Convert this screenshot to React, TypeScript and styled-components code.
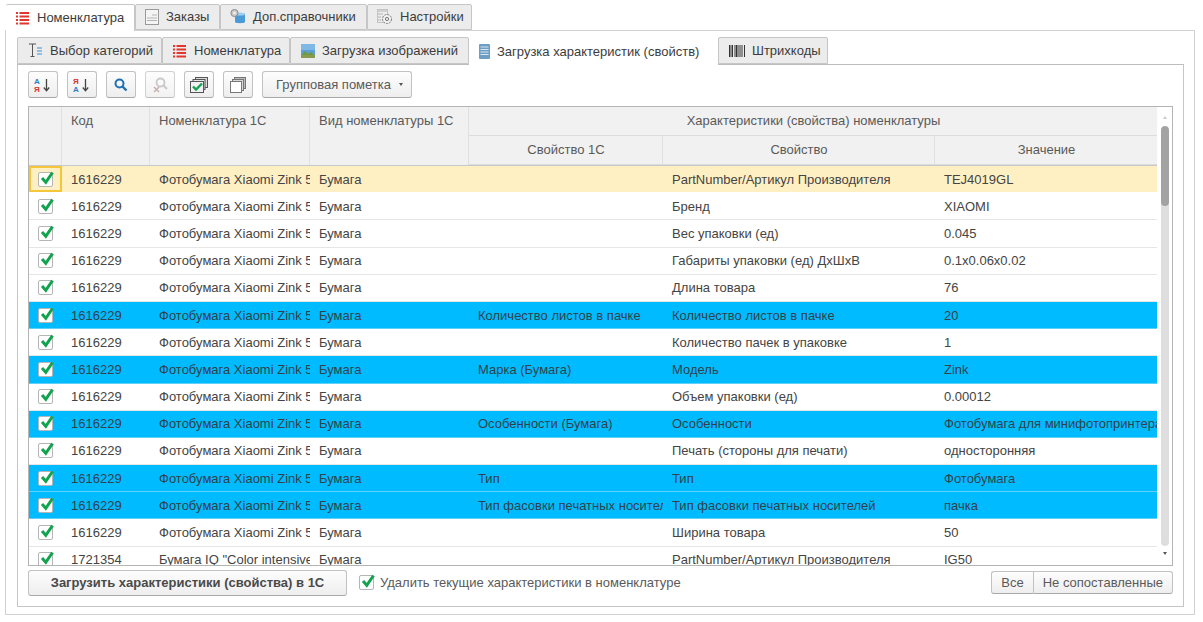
import { FC, ReactNode } from 'react';
import styled, { createGlobalStyle } from 'styled-components';

const GREEN = '#12a34f';

const GlobalStyle = createGlobalStyle`
  html, body {
    margin: 0;
    padding: 0;
    background: #fff;
  }
  body {
    font-family: "Liberation Sans", Arial, sans-serif;
    font-size: 13px;
    color: #4a4a4a;
  }
  * {
    box-sizing: border-box;
  }
`;

interface IRow {
  code: string;
  name: string;
  prop1c?: string;
  prop: string;
  value: string;
  blue?: boolean;
  current?: boolean;
}

const XIAOMI = 'Фотобумага Xiaomi Zink 50 листов';

const rows: IRow[] = [
  { code: '1616229', name: XIAOMI, prop: 'PartNumber/Артикул Производителя', value: 'TEJ4019GL', current: true },
  { code: '1616229', name: XIAOMI, prop: 'Бренд', value: 'XIAOMI' },
  { code: '1616229', name: XIAOMI, prop: 'Вес упаковки (ед)', value: '0.045' },
  { code: '1616229', name: XIAOMI, prop: 'Габариты упаковки (ед) ДхШхВ', value: '0.1x0.06x0.02' },
  { code: '1616229', name: XIAOMI, prop: 'Длина товара', value: '76' },
  { code: '1616229', name: XIAOMI, prop1c: 'Количество листов в пачке', prop: 'Количество листов в пачке', value: '20', blue: true },
  { code: '1616229', name: XIAOMI, prop: 'Количество пачек в упаковке', value: '1' },
  { code: '1616229', name: XIAOMI, prop1c: 'Марка (Бумага)', prop: 'Модель', value: 'Zink', blue: true },
  { code: '1616229', name: XIAOMI, prop: 'Объем упаковки (ед)', value: '0.00012' },
  { code: '1616229', name: XIAOMI, prop1c: 'Особенности (Бумага)', prop: 'Особенности', value: 'Фотобумага для минифотопринтера', blue: true },
  { code: '1616229', name: XIAOMI, prop: 'Печать (стороны для печати)', value: 'односторонняя' },
  { code: '1616229', name: XIAOMI, prop1c: 'Тип', prop: 'Тип', value: 'Фотобумага', blue: true },
  { code: '1616229', name: XIAOMI, prop1c: 'Тип фасовки печатных носителей', prop: 'Тип фасовки печатных носителей', value: 'пачка', blue: true },
  { code: '1616229', name: XIAOMI, prop: 'Ширина товара', value: '50' },
  { code: '1721354', name: 'Бумага IQ "Color intensive" A4', prop: 'PartNumber/Артикул Производителя', value: 'IG50' },
];

const ListIcon: FC = () => (
  <svg width="14" height="14" viewBox="0 0 14 14">
    <g fill="#e2372c">
      <rect x="0" y="1" width="2" height="2" />
      <rect x="0" y="4.5" width="2" height="2" />
      <rect x="0" y="8" width="2" height="2" />
      <rect x="0" y="11.5" width="2" height="2" />
      <rect x="3.5" y="1" width="9.5" height="2" />
      <rect x="3.5" y="4.5" width="9.5" height="2" />
      <rect x="3.5" y="8" width="9.5" height="2" />
      <rect x="3.5" y="11.5" width="9.5" height="2" />
    </g>
  </svg>
);

const OrdersIcon: FC = () => (
  <svg width="14" height="16" viewBox="0 0 14 16">
    <rect x="0.5" y="0.5" width="13" height="15" fill="#f4f4f4" stroke="#9a9a9a" />
    <path d="M7 6h5M2 9h10M2 11.5h10" stroke="#b5b5b5" />
  </svg>
);

const DirectoryIcon: FC = () => (
  <svg width="16" height="15" viewBox="0 0 16 15">
    <path d="M5 5c0-1.5 10-1.5 10 0v8c0 1.6-10 1.6-10 0z" fill="#4a9bd6" />
    <ellipse cx="10" cy="5" rx="5" ry="1.6" fill="#9cd0f0" />
    <circle cx="4.5" cy="4" r="3.6" fill="#c9c9c9" stroke="#8d8d8d" />
    <circle cx="4.5" cy="4" r="1.3" fill="#f2f2f2" />
  </svg>
);

const SettingsIcon: FC = () => (
  <svg width="16" height="16" viewBox="0 0 16 16" fill="none">
    <path d="M1 2h9M1 5h5M1 8h3M1 11h3" stroke="#b5b5b5" />
    <rect x="0.5" y="0.5" width="10" height="13" stroke="#c4c4c4" />
    <circle cx="10" cy="10" r="4.5" fill="#f0f0f0" stroke="#777" strokeDasharray="2 1" />
    <circle cx="10" cy="10" r="1.6" stroke="#777" />
  </svg>
);

const CategoryIcon: FC = () => (
  <svg width="15" height="15" viewBox="0 0 15 15" fill="none">
    <path d="M1 1h7M4.500 1v12M2.500 13.500h4" stroke="#555" />
    <path d="M9 5h5M9 8h5M9 11h5" stroke="#3a8fd0" />
  </svg>
);

const PictureIcon: FC = () => (
  <svg width="14" height="14" viewBox="0 0 14 14">
    <rect width="14" height="14" fill="#5d9fd4" />
    <rect y="0" width="14" height="6" fill="#7fb8e4" />
    <path d="M0 12l4-5 3 3 3-2 4 4v2H0z" fill="#6d9b3d" />
    <rect x="0" y="11" width="14" height="3" fill="#8a9a50" />
  </svg>
);

const PropertiesIcon: FC = () => (
  <svg width="11" height="15" viewBox="0 0 11 15">
    <rect width="11" height="15" rx="1" fill="#6f9ec4" />
    <path d="M1.500 3h8M1.500 5.500h8M1.500 8h8M1.500 10.500h8" stroke="#d6e6f2" />
  </svg>
);

const BarcodeIcon: FC = () => (
  <svg width="16" height="12" viewBox="0 0 16 12">
    <path d="M0.500 0v12M2 0v12M3.500 0v12M6 0v12M7.500 0v12M9 0v12M11 0v12M13 0v12M15.500 0v12" stroke="#333" />
  </svg>
);

const SortIcon: FC<{ reversed?: boolean }> = ({ reversed }) => (
  <svg width="18" height="17" viewBox="0 0 18 17">
    <text x="0" y="7.500" fontFamily="Liberation Sans" fontSize="8" fontWeight="700" fill={reversed ? '#d9362b' : '#2f7fc4'}>
      {reversed ? 'Я' : 'А'}
    </text>
    <text x="0" y="16" fontFamily="Liberation Sans" fontSize="8" fontWeight="700" fill={reversed ? '#2f7fc4' : '#d9362b'}>
      {reversed ? 'А' : 'Я'}
    </text>
    <path d="M12.500 3v11M9.800 11.500l2.700 3.300 2.700-3.300" stroke="#444" strokeWidth="1.300" fill="none" />
  </svg>
);

const SearchIcon: FC = () => (
  <svg width="14" height="14" viewBox="0 0 14 14" fill="none">
    <circle cx="5.500" cy="5.500" r="4" stroke="#1f6fb5" strokeWidth="2" />
    <path d="M8.500 8.500l4 4" stroke="#1f6fb5" strokeWidth="2.400" />
  </svg>
);

const SearchCancelIcon: FC = () => (
  <svg width="18" height="18" viewBox="0 0 18 18" fill="none">
    <circle cx="9.500" cy="6.500" r="4" stroke="#b8b8b8" strokeWidth="1.800" />
    <path d="M12.500 9.500l3.500 3.500" stroke="#b8b8b8" strokeWidth="2" />
    <path d="M3 11l5 5M8 11l-5 5" stroke="#b39a9a" strokeWidth="1.600" />
  </svg>
);

const CheckedCopiesIcon: FC = () => (
  <svg width="18" height="16" viewBox="0 0 18 16">
    <rect x="5.500" y="0.500" width="12" height="10" fill="#d9d9d9" stroke="#555" />
    <rect x="3" y="2.500" width="12" height="10" fill="#e6e6e6" stroke="#555" />
    <rect x="0.500" y="4.500" width="13" height="11" fill="#f2f2f2" stroke="#555" />
    <path d="M3 9.500l3 3 6-6" stroke={GREEN} strokeWidth="2.400" fill="none" />
  </svg>
);

const CopiesIcon: FC = () => (
  <svg width="16" height="16" viewBox="0 0 16 16" fill="#fff">
    <rect x="4.500" y="0.500" width="11" height="11" fill="#bcbcbc" stroke="#777" />
    <rect x="2.500" y="2.500" width="11" height="11" fill="#d8d8d8" stroke="#777" />
    <rect x="0.500" y="4.500" width="11" height="11" stroke="#777" />
  </svg>
);

const Check: FC<{ size?: number }> = ({ size = 15 }) => (
  <CheckBox $size={size}>
    <svg width={size + 1} height={size} viewBox="0 0 16 15" fill="none">
      <path d="M3 7l3.800 4.300L13.500 1.500" stroke={GREEN} strokeWidth="3" />
    </svg>
  </CheckBox>
);

const tabs: { label: string; icon: ReactNode; active?: boolean; width: number }[] = [
  { label: 'Номенклатура', icon: <ListIcon />, active: true, width: 129 },
  { label: 'Заказы', icon: <OrdersIcon />, width: 85 },
  { label: 'Доп.справочники', icon: <DirectoryIcon />, width: 147 },
  { label: 'Настройки', icon: <SettingsIcon />, width: 105 },
];

const subTabs: { label: string; icon: ReactNode; active?: boolean; width: number }[] = [
  { label: 'Выбор категорий', icon: <CategoryIcon />, width: 145 },
  { label: 'Номенклатура', icon: <ListIcon />, width: 128 },
  { label: 'Загрузка изображений', icon: <PictureIcon />, width: 179 },
  { label: 'Загрузка характеристик (свойств)', icon: <PropertiesIcon />, active: true, width: 249 },
  { label: 'Штрихкоды', icon: <BarcodeIcon />, width: 110 },
];

const App: FC = () => {
  return (
    <Root>
      <GlobalStyle />
      <TabStrip>
        {tabs.map((tab) => (
          <Tab key={tab.label} $active={tab.active} $width={tab.width}>
            {tab.icon}
            {tab.label}
          </Tab>
        ))}
      </TabStrip>
      <Panel>
        <SubTabStrip>
          {subTabs.map((tab) => (
            <SubTab key={tab.label} $active={tab.active} $width={tab.width}>
              {tab.icon}
              {tab.label}
            </SubTab>
          ))}
        </SubTabStrip>
        <SubPanel>
          <Toolbar>
            <ToolButton><SortIcon /></ToolButton>
            <ToolButton><SortIcon reversed /></ToolButton>
            <ToolButton><SearchIcon /></ToolButton>
            <ToolButton $disabled><SearchCancelIcon /></ToolButton>
            <ToolButton><CheckedCopiesIcon /></ToolButton>
            <ToolButton><CopiesIcon /></ToolButton>
            <MenuButton>
              Групповая пометка
              <Caret />
            </MenuButton>
          </Toolbar>
          <Grid>
            <GridBody>
              <HeaderRow>
                <HeaderCell $area="1 / 1 / 3 / 2" />
                <HeaderCell $area="1 / 2 / 3 / 3">Код</HeaderCell>
                <HeaderCell $area="1 / 3 / 3 / 4">Номенклатура 1С</HeaderCell>
                <HeaderCell $area="1 / 4 / 3 / 5">Вид номенклатуры 1С</HeaderCell>
                <HeaderCell $area="1 / 5 / 2 / 8" $center>Характеристики (свойства) номенклатуры</HeaderCell>
                <HeaderCell $area="2 / 5 / 3 / 6" $center>Свойство 1С</HeaderCell>
                <HeaderCell $area="2 / 6 / 3 / 7" $center>Свойство</HeaderCell>
                <HeaderCell $area="2 / 7 / 3 / 8" $center>Значение</HeaderCell>
              </HeaderRow>
              <RowList>
                {rows.map((row, index) => (
                  <Row key={index} $blue={row.blue} $current={row.current}>
                    <CheckCell $current={row.current}>
                      <Check />
                    </CheckCell>
                    <Cell>{row.code}</Cell>
                    <Cell>{row.name}</Cell>
                    <Cell>Бумага</Cell>
                    <Cell>{row.prop1c}</Cell>
                    <Cell>{row.prop}</Cell>
                    <Cell>{row.value}</Cell>
                  </Row>
                ))}
              </RowList>
            </GridBody>
            <ScrollBar>
              <ScrollArrow />
              <ScrollTrack>
                <ScrollThumb />
              </ScrollTrack>
              <ScrollArrow $down />
            </ScrollBar>
          </Grid>
          <Footer>
            <LoadButton>Загрузить характеристики (свойства) в 1С</LoadButton>
            <FooterCheck>
              <Check />
              Удалить текущие характеристики в номенклатуре
            </FooterCheck>
            <ButtonGroup>
              <GroupButton>Все</GroupButton>
              <GroupButton>Не сопоставленные</GroupButton>
            </ButtonGroup>
          </Footer>
        </SubPanel>
      </Panel>
    </Root>
  );
};

const Root = styled.div`
  width: 1203px;
  height: 622px;
  padding: 4px 8px 7px 5px;
  display: flex;
  flex-direction: column;
  overflow: hidden;
`;

const TabStrip = styled.div`
  display: flex;
  padding-left: 1px;
  height: 26px;
  position: relative;
  z-index: 1;
`;

const Tab = styled.div<{ $active?: boolean; $width: number }>`
  width: ${(p) => p.$width}px;
  height: ${(p) => (p.$active ? 27 : 26)}px;
  display: flex;
  align-items: center;
  gap: 7px;
  padding-left: ${(p) => (p.$active ? 10 : 9)}px;
  padding-bottom: 1px;
  background: ${(p) => (p.$active ? '#fff' : '#ececec')};
  border: 1px solid #c6c6c6;
  border-bottom: ${(p) => (p.$active ? 'none' : '1px solid #c6c6c6')};
  border-left: ${(p) => (p.$active ? 'none' : '1px solid #c6c6c6')};
  border-radius: 2px 2px 0 0;
  color: #3c3c3c;
  white-space: nowrap;
`;

const Panel = styled.div`
  flex: 1;
  border: 1px solid #d2d2d2;
  padding: 6px 10px 7px 11px;
  display: flex;
  flex-direction: column;
`;

const SubTabStrip = styled.div`
  display: flex;
  height: 27px;
  position: relative;
  z-index: 1;
`;

const SubTab = styled.div<{ $active?: boolean; $width: number }>`
  width: ${(p) => p.$width}px;
  height: ${(p) => (p.$active ? 28 : 27)}px;
  display: flex;
  align-items: center;
  gap: 7px;
  padding-left: 10px;
  background: ${(p) => (p.$active ? '#fff' : '#ececec')};
  border: 1px solid #c6c6c6;
  border-left-width: ${(p) => (p.$active ? 0 : 1)}px;
  border-right-width: ${(p) => (p.$active ? 0 : 1)}px;
  border-bottom-width: ${(p) => (p.$active ? 0 : 1)}px;
  border-top-color: ${(p) => (p.$active ? '#fff' : '#c6c6c6')};
  border-radius: 2px 2px 0 0;
  color: #3c3c3c;
  white-space: nowrap;
`;

const SubPanel = styled.div`
  flex: 1;
  border: 1px solid #c6c6c6;
  border-top-color: #bdbdbd;
  padding: 6px 10px 7px 10px;
  display: flex;
  flex-direction: column;
`;

const Toolbar = styled.div`
  display: flex;
  gap: 9px;
  height: 27px;
  margin-bottom: 8px;
`;

const ToolButton = styled.div<{ $disabled?: boolean }>`
  width: 30px;
  height: 27px;
  display: flex;
  align-items: center;
  justify-content: center;
  border: 1px solid #c2c2c2;
  border-bottom-color: #a8a8a8;
  border-radius: 3px;
  background: linear-gradient(#fdfdfd, #eeeeee);
  opacity: ${(p) => (p.$disabled ? 0.75 : 1)};
`;

const MenuButton = styled.div`
  width: 150px;
  height: 27px;
  display: flex;
  align-items: center;
  padding-left: 13px;
  gap: 8px;
  border: 1px solid #c2c2c2;
  border-bottom-color: #a8a8a8;
  border-radius: 3px;
  background: linear-gradient(#fdfdfd, #eeeeee);
  color: #5a5a5a;
  white-space: nowrap;
`;

const Caret = styled.span`
  width: 0;
  height: 0;
  border-left: 2.5px solid transparent;
  border-right: 2.5px solid transparent;
  border-top: 3px solid #555;
`;

const Grid = styled.div`
  display: flex;
  height: 460px;
  border: 1px solid #b4b4b4;
  overflow: hidden;
`;

const GridBody = styled.div`
  width: 1129px;
  overflow: hidden;
  display: flex;
  flex-direction: column;
`;

const COLUMNS = '33px 88px 160px 159px 194px 272px 223px';

const HeaderRow = styled.div`
  display: grid;
  grid-template-columns: ${COLUMNS};
  grid-template-rows: 29px 29px;
  background: #f1f1f1;
  border-bottom: 1px solid #c8c8c8;
  flex: none;
`;

const HeaderCell = styled.div<{ $area: string; $center?: boolean }>`
  grid-area: ${(p) => p.$area};
  padding: 6px 8px 0 9px;
  text-align: ${(p) => (p.$center ? 'center' : 'left')};
  border-right: 1px solid #e0e0e0;
  border-bottom: ${(p) => (p.$center ? '1px solid #dcdcdc' : 'none')};
  color: #5a5a5a;
  white-space: nowrap;
`;

const RowList = styled.div`
  flex: 1;
  overflow: hidden;
`;

const Row = styled.div<{ $blue?: boolean; $current?: boolean }>`
  display: grid;
  grid-template-columns: ${COLUMNS};
  height: 27.2px;
  border-bottom: 1px solid ${(p) => (p.$blue ? '#5fd0f8' : p.$current ? '#fff' : '#e6e6e6')};
  background: ${(p) => (p.$blue ? '#00bbff' : p.$current ? '#fff0c4' : '#fff')};
  color: ${(p) => (p.$blue ? '#33404a' : '#444')};
`;

const Cell = styled.div`
  display: flex;
  align-items: center;
  padding: 0 9px;
  min-width: 0;
  overflow: hidden;
  white-space: nowrap;
  span {
    overflow: hidden;
    text-overflow: ellipsis;
  }
`;

const CheckCell = styled.div<{ $current?: boolean }>`
  display: flex;
  align-items: center;
  justify-content: center;
  border: ${(p) => (p.$current ? '2px solid #f5c63a' : 'none')};
`;

const CheckBox = styled.span<{ $size: number }>`
  width: ${(p) => p.$size}px;
  height: ${(p) => p.$size}px;
  flex: none;
  display: block;
  background: #fff;
  border: 1px solid #b5b5b5;
  border-radius: 2px;
  svg {
    display: block;
    margin-top: -2px;
  }
`;

const ScrollBar = styled.div`
  width: 15px;
  display: flex;
  flex-direction: column;
  align-items: center;
  background: #fff;
`;

const ScrollArrow = styled.span<{ $down?: boolean }>`
  flex: none;
  height: 24px;
  width: 0;
  margin-top: ${(p) => (p.$down ? 6 : 9)}px;
  border-left: 2px solid transparent;
  border-right: 2px solid transparent;
  height: 0;
  margin-bottom: ${(p) => (p.$down ? 10 : 7)}px;
  ${(p) => (p.$down ? 'border-top: 3px solid #555;' : 'border-bottom: 3px solid #ccc;')}
`;

const ScrollTrack = styled.div`
  flex: 1;
  width: 8px;
  background: #dedede;
  border-radius: 4px;
  overflow: hidden;
`;

const ScrollThumb = styled.div`
  height: 80px;
  background: #a3a3a3;
  border-radius: 4px;
`;

const Footer = styled.div`
  flex: 1;
  display: flex;
  align-items: center;
`;

const LoadButton = styled.div`
  width: 319px;
  height: 26px;
  display: flex;
  align-items: center;
  justify-content: center;
  border: 1px solid #c2c2c2;
  border-bottom-color: #a8a8a8;
  border-radius: 3px;
  background: linear-gradient(#fdfdfd, #eeeeee);
  font-weight: 700;
  color: #4a4a4a;
  white-space: nowrap;
`;

const FooterCheck = styled.div`
  display: flex;
  align-items: center;
  gap: 6px;
  margin-left: 12px;
  color: #5a5a5a;
`;

const ButtonGroup = styled.div`
  display: flex;
  margin-left: auto;
`;

const GroupButton = styled.div`
  height: 23px;
  padding: 0 9px;
  display: flex;
  align-items: center;
  border: 1px solid #c2c2c2;
  border-bottom-color: #a8a8a8;
  background: linear-gradient(#fdfdfd, #eeeeee);
  color: #5a5a5a;
  &:first-child {
    border-radius: 3px 0 0 3px;
    border-right: none;
  }
  &:last-child {
    border-radius: 0 3px 3px 0;
  }
`;

export default App;
